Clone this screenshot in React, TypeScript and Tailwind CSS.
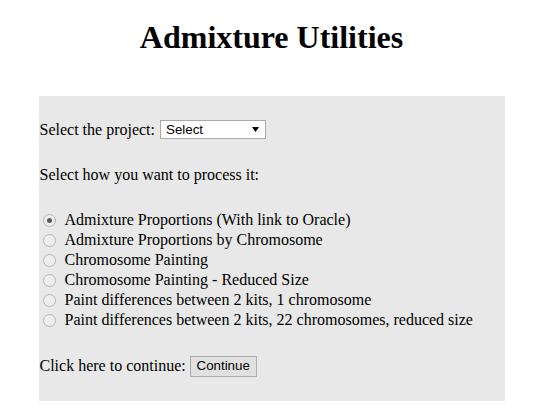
// Admixture Utilities: formulario simple de selección de proyecto y tipo de proceso.
import { useState } from 'react'

const opciones = [
  'Admixture Proportions (With link to Oracle)',
  'Admixture Proportions by Chromosome',
  'Chromosome Painting',
  'Chromosome Painting - Reduced Size',
  'Paint differences between 2 kits, 1 chromosome',
  'Paint differences between 2 kits, 22 chromosomes, reduced size',
]

function Radio({ checked }: { checked: boolean }) {
  return (
    <span className="ml-[3px] mr-[9px] flex h-[13px] w-[13px] flex-none items-center justify-center rounded-full border border-[#b4b4b4] bg-[#eeeeee]">
      {checked && <span className="h-[5px] w-[5px] rounded-full bg-[#595959]" />}
    </span>
  )
}

export default function App() {
  const [modo, setModo] = useState(0)

  return (
    <div className="min-h-[418px] bg-white font-['Liberation_Serif',_'Times_New_Roman',_serif] text-[16px] text-black">
      <h1 className="pt-[19px] text-center text-[32px] font-bold leading-[36px]">Admixture Utilities</h1>

      <div className="mx-auto mt-[41px] w-[466px] bg-[#e8e8e8] pb-[24px] pl-[1px] pt-[23px]">
        <div className="flex h-[21px] items-center gap-[5px]">
          <span className="leading-5">Select the project:</span>
          <div className="flex h-[19px] w-[106px] items-center justify-between border border-[#a9a9a9] bg-white pl-[5px] pr-[6px] font-['Liberation_Sans',_Arial,_sans-serif] text-[13.33px]">
            <span>Select</span>
            <svg width="7" height="5" viewBox="0 0 7 5" aria-hidden="true">
              <path d="M0 0h7L3.5 5z" fill="#000" />
            </svg>
          </div>
        </div>

        <p className="mt-[25px] leading-5">Select how you want to process it:</p>

        <div className="mt-[25px]">
          {opciones.map((o, i) => (
            <label key={o} className="flex h-5 cursor-default items-center" onClick={() => setModo(i)}>
              <Radio checked={modo === i} />
              <span className="leading-5">{o}</span>
            </label>
          ))}
        </div>

        <div className="mt-[25px] flex h-[22px] items-center gap-[4px]">
          <span className="leading-5">Click here to continue:</span>
          <button
            type="button"
            className="h-[21px] w-[67px] border border-[#adadad] bg-[#e1e1e1] text-center font-['Liberation_Sans',_Arial,_sans-serif] text-[13.33px] leading-none"
          >
            Continue
          </button>
        </div>
      </div>
    </div>
  )
}
